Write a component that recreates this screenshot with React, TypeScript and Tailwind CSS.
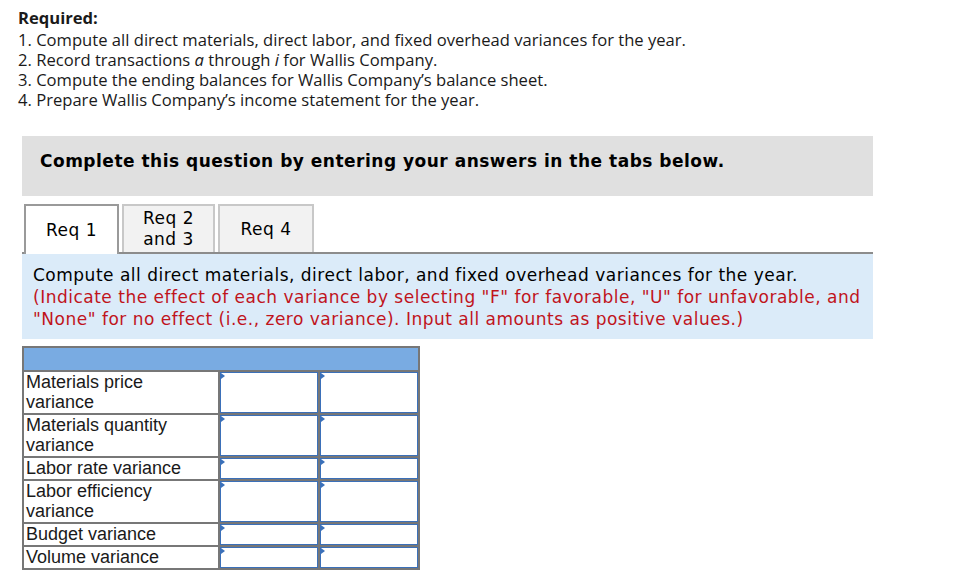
import React from "react";

const rows = [
  "Materials price variance",
  "Materials quantity variance",
  "Labor rate variance",
  "Labor efficiency variance",
  "Budget variance",
  "Volume variance",
];

const InputCell = () => (
  <div className="relative border border-[#3b70b9] bg-white">
    <span className="absolute left-0 top-0 h-0 w-0 border-y-[3px] border-l-[4px] border-y-transparent border-l-[#3b70b9]" />
  </div>
);

const App = () => {
  return (
    <div className="min-h-screen w-[962px] bg-white text-black">
      {/* REQUIRED */}
      <div className="pl-[18px] pt-2 font-['Open_Sans',Arial,sans-serif] text-[16.6px] leading-[20px] text-[#1a1a1a]">
        <p className="mb-0.5 font-bold">Required:</p>
        <p>1. Compute all direct materials, direct labor, and fixed overhead variances for the year.</p>
        <p>
          2. Record transactions <i>a</i> through <i>i</i> for Wallis Company.
        </p>
        <p>3. Compute the ending balances for Wallis Company’s balance sheet.</p>
        <p>4. Prepare Wallis Company’s income statement for the year.</p>
      </div>

      <div className="ml-[22px] w-[851px] font-['DejaVu_Sans',Verdana,sans-serif] tracking-[0.5px]">
        {/* INSTRUCTIONS BAR */}
        <div className="mt-[26px] h-[60px] bg-[#e0e0e0] pl-[18px] pt-[14px] text-[17px] font-bold leading-[22px]">
          Complete this question by entering your answers in the tabs below.
        </div>

        {/* TABS */}
        <div className="mt-2 flex gap-[3px] border-b-2 border-[#8c8c8c] pl-[2px] text-[17px] leading-[21px]">
          <div className="-mb-[2px] flex h-[50px] w-[95px] items-center justify-center border-2 border-b-0 border-[#9a9a9a] bg-white">
            Req 1
          </div>
          <div className="flex h-[48px] w-[93px] flex-col items-center justify-center border-2 border-b-0 border-[#c8c8c8] bg-[#f2f2f2] text-center">
            <span>Req 2</span>
            <span>and 3</span>
          </div>
          <div className="flex h-[48px] w-[96px] items-center justify-center border-2 border-b-0 border-[#c8c8c8] bg-[#f2f2f2]">
            Req 4
          </div>
        </div>

        {/* QUESTION */}
        <div className="bg-[#dbebf9] pb-[9px] pl-[11px] pt-[10px] text-[17px] leading-[22px]">
          <p>Compute all direct materials, direct labor, and fixed overhead variances for the year.</p>
          <p className="whitespace-nowrap text-[#c0141c]">
            (Indicate the effect of each variance by selecting "F" for favorable, "U" for unfavorable, and
            <br />
            "None" for no effect (i.e., zero variance). Input all amounts as positive values.)
          </p>
        </div>
      </div>

      {/* TABLE */}
      <div className="ml-[22px] mt-[7px] grid w-[398px] grid-cols-[194px_98px_98px] gap-[2px] bg-[#777777] p-[2px] font-['Liberation_Sans',Arial,sans-serif] text-[18px] leading-5 text-[#1a1a1a]">
        <div className="col-span-3 h-[22px] bg-[#79abe2]" />
        {rows.map((label) => (
          <React.Fragment key={label}>
            <div className="bg-white px-[2px] pb-px">{label}</div>
            <InputCell />
            <InputCell />
          </React.Fragment>
        ))}
      </div>
    </div>
  );
};

export default App;
